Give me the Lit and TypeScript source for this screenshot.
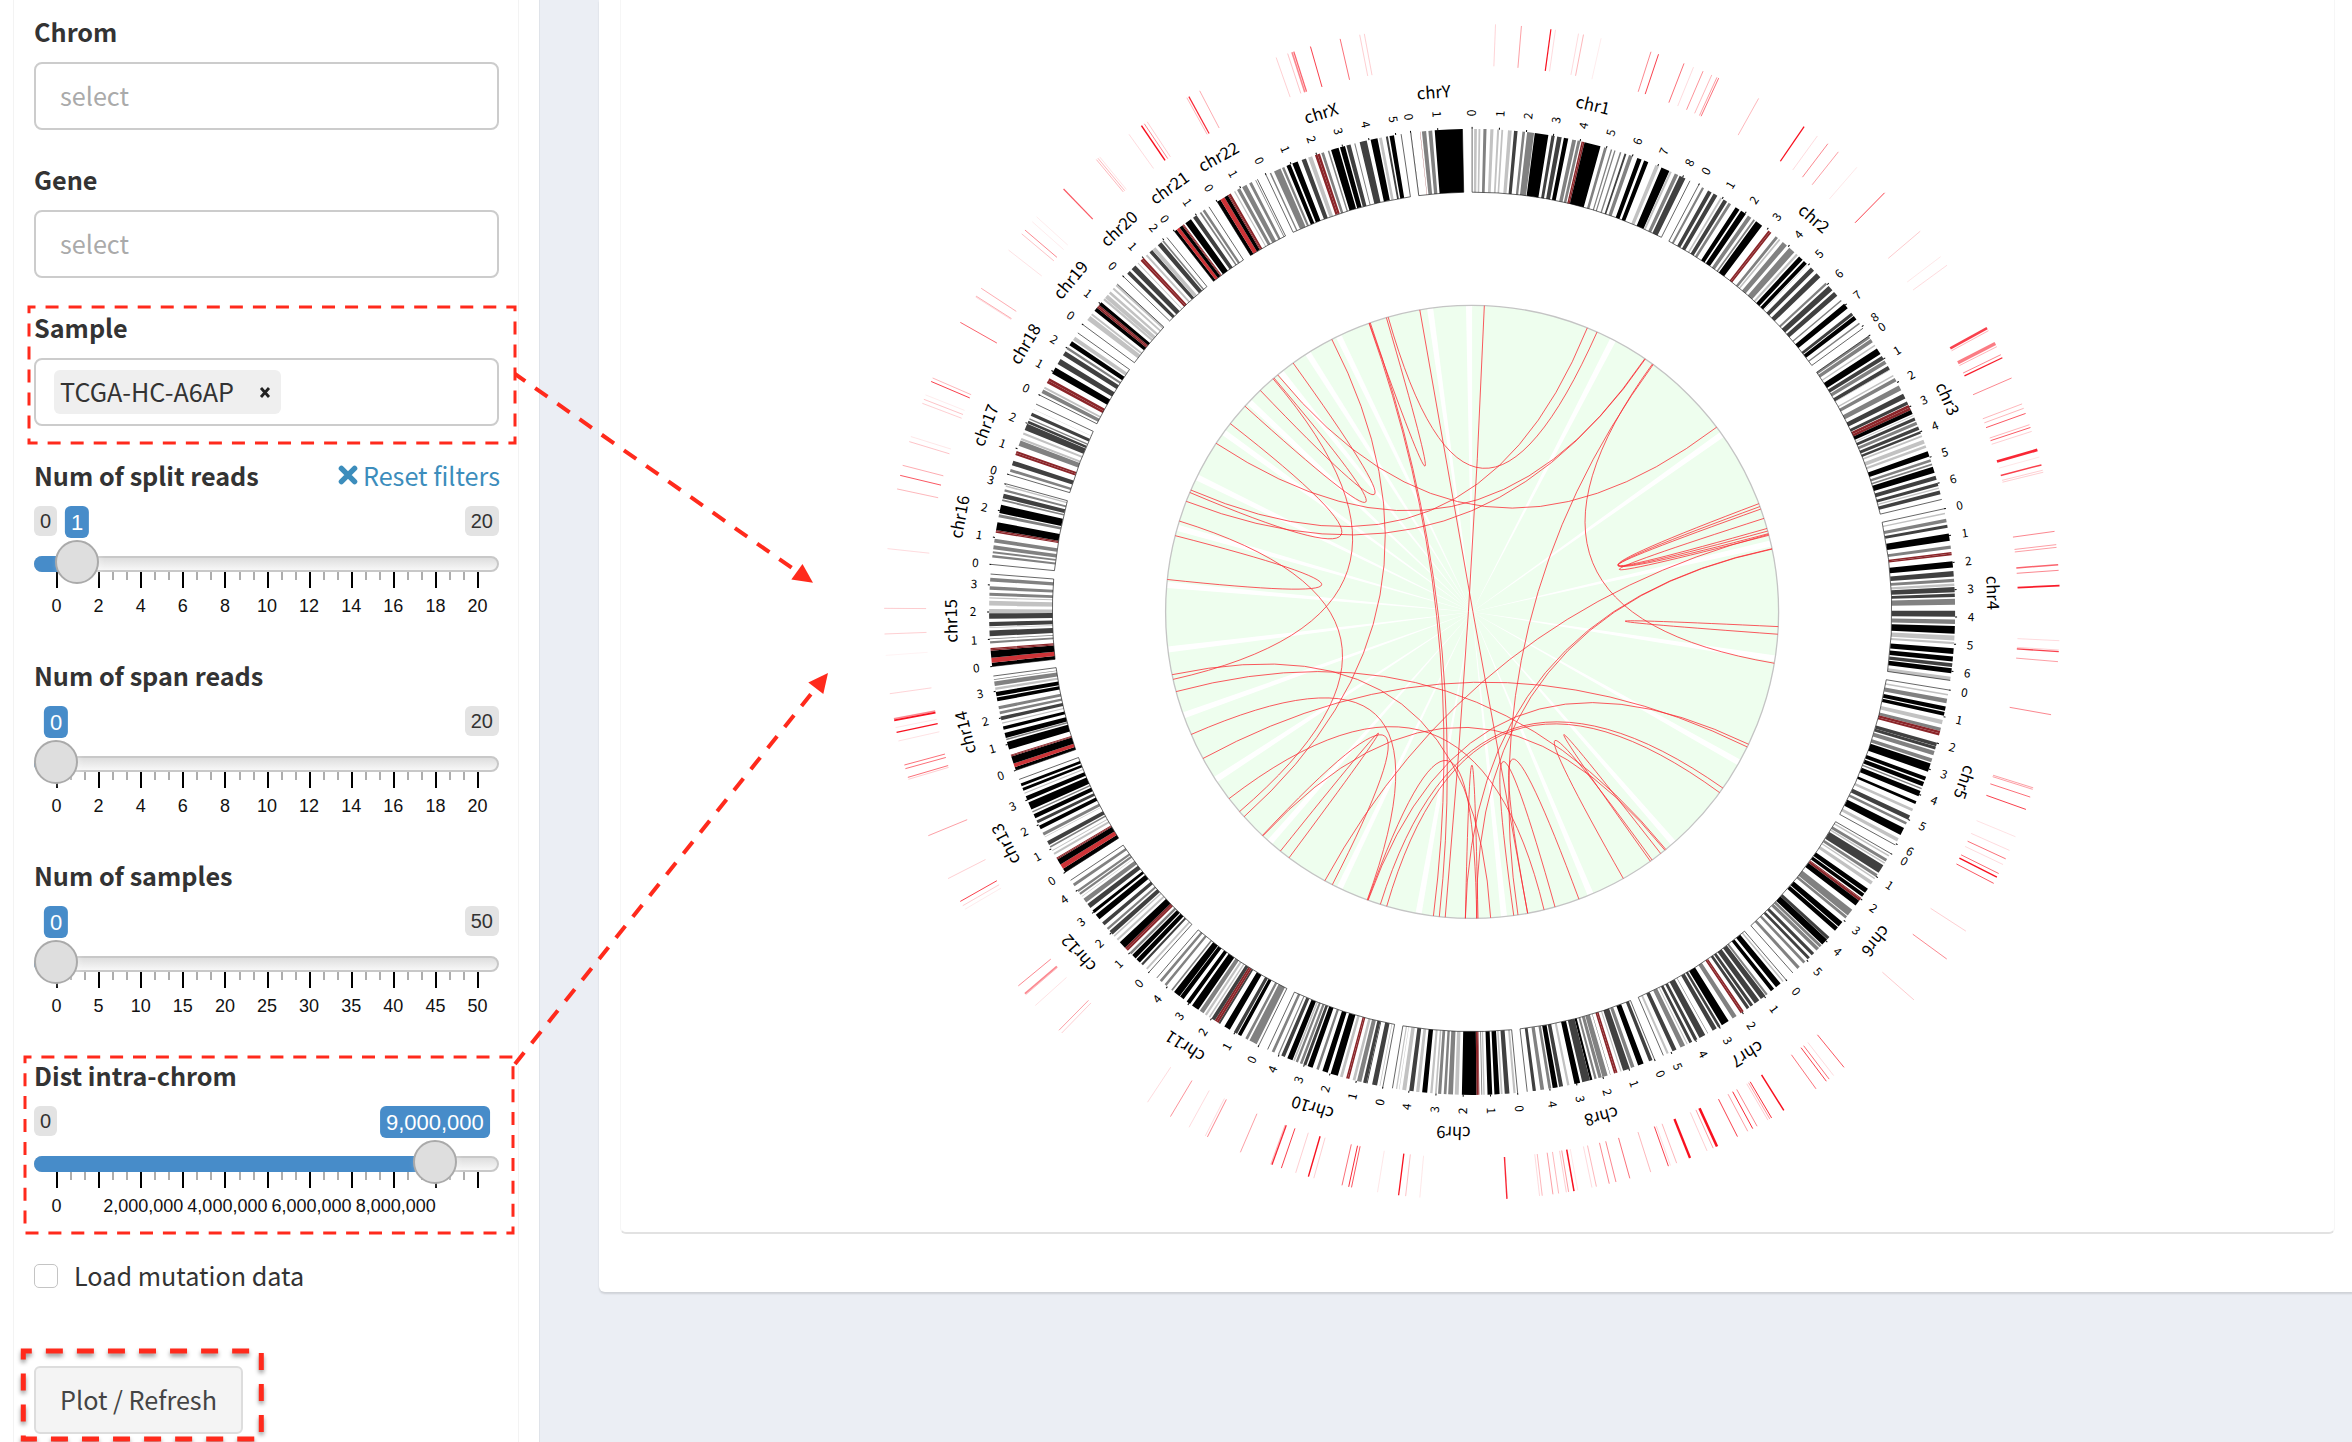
import { LitElement, html, svg, css } from 'lit';
import { customElement, property } from 'lit/decorators.js';

/* ---------- genome data ---------- */

// Cytobands per chromosome: end position in 0.1 Mb followed by the stain code.
// n negative, a/b/c/d 25/50/75/100 % positive, v variable, e centromere, s stalk
const BANDS: Array<[string, string]> = [
  ['chr1', '23n 53a 71n 91a 125n 159b 201n 236a 276n 299a 323n 343a 396n 437a 463n 502c 556n 585b 608n 685b 693n 844d 879n 915c 943n 993c 1018n 1067d 1112n 1155b 1172n 1204b 1217n 1234e 1251e 1432v 1475n 1506b 1551n 1566b 1591n 1605b 1655n 1672b 1709n 1730c 1761n 1803b 1858n 1908d 1938n 1987d 2071n 2113a 2144n 2239d 2244n 2268a 2305n 2346b 2364n 2435c 2490n'],
  ['chr2', '44n 69b 120n 165c 190n 238c 277n 298a 318n 363c 383n 415b 475n 526d 547n 610d 639n 684b 713n 733b 748n 831d 918n 939e 960e 1021n 1053b 1067n 1087a 1122n 1181b 1216n 1291b 1317n 1343a 1361n 1415d 1434n 1479d 1490n 1496a 1540n 1589c 1629n 1689c 1771n 1797b 1821n 1885c 1911n 1966c 2025n 2041b 2082n 2145d 2207n 2243c 2252n 2301d 2347n 2364b 2422n'],
  ['chr3', '28b 40n 81b 116n 132a 163n 238d 263n 308c 320n 364b 393n 436c 441n 442b 506n 523a 544n 586b 638n 697b 741n 798c 835n 871c 878n 909e 940e 986v 1003n 1012a 1031n 1065c 1082n 1116b 1137n 1176c 1193n 1222c 1241n 1261a 1295n 1340a 1360n 1390a 1431n 1492d 1523n 1553b 1573n 1593b 1610n 1679d 1712n 1760c 1793n 1830c 1848n 1863a 1882n 1926c 1983n'],
  ['chr4', '45n 60a 113n 150b 178n 213c 277n 358d 412n 446b 482n 500e 518e 585n 655d 694n 753c 779n 814b 831n 860a 871n 928c 942n 979c 1001n 1067b 1131n 1199c 1229n 1278b 1301n 1385d 1405n 1459a 1475n 1500a 1546n 1608d 1636n 1692d 1710n 1754c 1766n 1823d 1861n 1902a'],
  ['chr5', '44n 63a 99n 150b 184n 233d 246n 289d 338n 384a 425n 461b 488e 514e 596n 636c 639n 674c 691n 740b 776n 821b 835n 930d 989n 1034d 1051n 1102d 1121n 1138b 1159n 1221d 1279n 1312d 1369n 1401a 1451n 1504c 1533n 1563b 1605n 1690d 1733n 1771a 1815n'],
  ['chr6', '23n 42a 71n 106b 116n 134a 152n 252c 271n 305b 321n 335a 366n 405a 462n 518d 530n 572d 587n 598e 626e 627n 692d 752n 832b 842n 873b 925n 989d 1000n 1050d 1142n 1179c 1181n 1258d 1268n 1300b 1309n 1349b 1386n 1424c 1452n 1486c 1521n 1552b 1606n 1641b 1708n'],
  ['chr7', '28n 45a 72n 137d 165n 209d 255n 279b 288n 349c 371n 433c 454n 490c 505n 539c 581n 601e 621e 675n 727b 779n 867d 885n 915c 933n 984c 1042n 1049b 1078n 1150c 1177n 1214c 1241n 1275c 1296n 1308a 1329n 1385b 1434n 1482c 1528n 1552a 1593n'],
  ['chr8', '23n 63c 128n 192d 235n 275b 290n 367c 385n 399a 432n 452e 472e 513n 517c 546n 606b 613n 651b 671n 696b 720n 746d 747n 835c 859n 923d 979n 1005a 1051n 1095c 1111n 1167d 1183n 1215b 1263n 1304b 1354n 1390c 1451n'],
  ['chr9', '22n 46a 90n 142c 166n 185a 199n 256d 280n 332d 363n 379a 390n 400b 422n 430e 455e 615v 650n 693a 713n 766b 785n 815b 843n 878b 892n 912a 939n 965a 998n 1054d 1085n 1121a 1149n 1198c 1231n 1275a 1306n 1311a 1331n 1345a 1384n'],
  ['chr10', '30n 38a 66n 122c 173n 183c 184n 223c 243n 293b 311n 342a 380n 398e 416e 455n 486a 511n 594d 628n 689d 731n 759b 803n 861d 877n 911c 923n 952b 975n 1001b 1012n 1031a 1040n 1101d 1131n 1173c 1199n 1213b 1257n 1288b 1338n'],
  ['chr11', '28n 117b 138n 168b 220n 262d 272n 312c 364n 434d 488n 510c 534e 558e 601c 619n 636a 661n 687a 705n 755b 774n 859d 886n 932d 974n 1023d 1030n 1106d 1127n 1146b 1213n 1240b 1279n 1309b 1351n'],
  ['chr12', '32n 53a 100n 126c 146n 198d 211n 263d 276n 305b 332n 355e 378e 460d 487n 511a 545n 562a 577n 627c 647n 673b 711n 753c 799n 863d 886n 922d 958n 1012c 1035n 1086b 1113n 1119a 1139n 1164b 1177n 1203b 1254n 1287b 1333n'],
  ['chr13', '46v 101s 165v 177e 189e 226n 249a 272n 283a 316n 334b 349n 395c 446n 452a 467n 503b 547n 590d 618n 652c 681n 728d 749n 766b 785n 871d 894n 944d 975n 987a 1011n 1042d 1064n 1096d 1144n'],
  ['chr14', '36v 80s 161v 172e 182e 241n 329d 348n 366b 374n 430d 467n 504d 536n 550a 576n 616c 643n 674b 698n 733b 788n 831d 844n 893d 914n 942a 958n 1009b 1027n 1035b 1070n'],
  ['chr15', '42v 97s 175v 190e 205e 255n 278b 300n 309b 334n 398c 425n 433a 445n 492c 526n 588c 590n 634a 669n 670a 672n 724a 749n 763a 780n 814b 847n 885b 938n 980b 1020n'],
  ['chr16', '78n 104b 125n 147b 167n 212b 242n 285b 353n 368e 384e 470v 526n 560b 573n 666d 708n 728b 741n 792c 816n 841b 870n 887a 903n'],
  ['chr17', '34n 65b 108n 161c 227n 251e 274e 335n 398b 402n 428a 468n 493a 521n 595c 602n 631c 646n 662b 691n 729c 768n 772a 833n'],
  ['chr18', '29n 72b 85n 109a 154n 185e 215e 275n 351d 395n 459c 507n 562c 586n 613b 639n 691d 710n 754a 804n'],
  ['chr19', '69n 126a 138n 161a 199n 242v 262e 281e 319v 351n 378a 382n 429a 447n 475a 509n 531a 558n 586a'],
  ['chr20', '51n 92c 120n 179c 213n 223a 257n 281e 304e 335n 358a 390n 431c 435n 478a 512n 564c 578n 597b 644n'],
  ['chr21', '31v 70s 109v 120e 130e 150n 226d 255n 302c 344n 364b 383n 412b 467n'],
  ['chr22', '43v 94s 137v 150e 174e 217n 231a 255n 292b 318n 372b 406n 438b 481n 491b 508n'],
  ['chrX', '44n 61b 96n 174b 192n 219b 246n 293d 315n 378d 425n 476c 501n 548a 581n 610e 638e 654n 685b 730n 747b 768n 854d 870n 927d 943n 991c 1033n 1045b 1094n 1174c 1218n 1295d 1313n 1345a 1389n 1412c 1430n 1480d 1560n'],
  ['chrY', '3n 6b 103n 104e 106e 124n 171b 196n 238b 266n 572v'],
];

const STAIN: Record<string, string> = {
  n: '#ffffff', a: '#c2c2c2', b: '#818181', c: '#404040', d: '#000000',
  v: '#000000', e: '#8b2529', s: '#cd3337',
};

const CX = 1472.1, CY = 611.9;
const R_LINK = 306.5, R_IN = 419.7, R_OUT = 483, R_MARK0 = 546, R_MARK1 = 588;
const PAD = 0.02;

interface Chrom { name: string; start: number; end: number; bands: Array<[number, number, string]>; ticks: number[] }

const parsed = BANDS.map(([name, s]) => ({
  name,
  list: s.split(' ').map((b) => [parseInt(b, 10) / 10, b.slice(-1)] as [number, string]),
}));
const total = parsed.reduce((t, c) => t + c.list[c.list.length - 1][0], 0);
const K = (2 * Math.PI - PAD * parsed.length) / total;

let cursor = 0;
const CHROMS: Chrom[] = parsed.map(({ name, list }) => {
  const start = cursor;
  let prev = 0;
  const bands = list.map(([end, stain]) => {
    const b: [number, number, string] = [start + prev * K, start + end * K, stain];
    prev = end;
    return b;
  });
  const ticks: number[] = [];
  for (let mb = 0; mb <= prev; mb += 30) ticks.push(start + mb * K);
  const end = start + prev * K;
  cursor = end + PAD;
  return { name, start, end, bands, ticks };
});

const pt = (a: number, r: number) =>
  `${(CX + r * Math.sin(a)).toFixed(2)},${(CY - r * Math.cos(a)).toFixed(2)}`;

const ring = (a0: number, a1: number, r0: number, r1: number) =>
  `M${pt(a0, r1)}A${r1},${r1} 0 0 1 ${pt(a1, r1)}L${pt(a1, r0)}A${r0},${r0} 0 0 0 ${pt(a0, r0)}Z`;

// Fusion links: endpoint pairs on the inner rim, in link units around (789, 788)
const LINKS: number[][] = [
  [818, 62, 725, 1515], [665, 72, 921, 1504], [1062, 115, 122, 499], [1200, 188, 180, 387],
  [1199, 187, 109, 525], [215, 341, 120, 505], [1085, 125, 590, 89], [586, 91, 545, 102],
  [544, 102, 697, 1511], [547, 101, 711, 1513], [456, 141, 248, 1274], [237, 1262, 93, 572],
  [316, 234, 80, 948], [364, 197, 286, 262], [249, 299, 318, 232], [328, 226, 1369, 350],
  [65, 711, 84, 607], [1216, 201, 1507, 910], [1218, 202, 898, 1508], [888, 1510, 986, 1489],
  [921, 1504, 1043, 1471], [1501, 638, 773, 1517], [1501, 639, 800, 1517], [1493, 604, 439, 1427],
  [457, 1436, 291, 1319], [355, 1371, 333, 1357], [122, 1079, 540, 1472], [541, 1473, 800, 1517],
  [77, 937, 833, 1514], [1443, 1101, 542, 1473], [1441, 1108, 150, 1136], [1384, 1206, 571, 1483],
  [1378, 1218, 586, 1488], [87, 977, 1249, 1352], [211, 1232, 960, 1496], [292, 1320, 1247, 1354],
  [1213, 1381, 1237, 1362], [1148, 1421, 1217, 1378], [773, 1517, 803, 1517], [1470, 531, 1493, 602],
  [1472, 538, 1491, 596], [1474, 544, 1489, 590], [1482, 566, 1494, 606], [1517, 823, 1515, 841],
];
const linkPath = ([x1, y1, x2, y2]: number[]) => {
  const a = Math.atan2(x1 - 789, 788 - y1);
  const b = Math.atan2(x2 - 789, 788 - y2);
  return `M${pt(a, R_LINK)}Q${CX},${CY} ${pt(b, R_LINK)}`;
};

// Outer marks, by sector: origin, units per pixel, then x, y, opacity and optional width
interface Sector { ox: number; oy: number; sx: number; sy: number; m: number[][] }
const SECTORS: Sector[] = [
  { ox: 1400, oy: 0, sx: 2.24, sy: 3, m: [
    [214, 73, .18], [272, 78, .4], [338, 88, 1, 1.2], [348, 92, .15], [400, 100, .15], [411, 104, .3], [450, 118, .08],
    [562, 156, .5], [579, 163, .8], [636, 191, .6], [657, 203, .15], [679, 213, .45], [698, 226, .3], [710, 232, .4],
    [714, 234, .6], [803, 296, .3], [905, 380, 1, 1.3], [935, 408, .15], [958, 432, .5], [981, 457, .4], [1022, 504, .1],
    [1085, 579, .8], [1165, 694, .22], [1210, 771, .1], [1224, 797, .15], [1314, 985, .8, 2.6], [1317, 993, .3],
    [1333, 1031, .55, 3.4], [1334, 1042, .3], [1346, 1064, .5], [1348, 1074, .95, 1.3], [1370, 1134, .5], [1393, 1212, .3],
    [1397, 1225, .3], [1400, 1241, .7], [1408, 1275, .3], [1411, 1283, .7], [1413, 1295, .2], [1427, 1350, .9, 2.8],
    [1430, 1372, .1], [1436, 1395, .8, 1.5], [1439, 1411, .2], [1440, 1417, .2]] },
  { ox: 1700, oy: 440, sx: 3, sy: 3, m: [
    [1064, 274, .5], [1068, 314, .4], [1070, 322, .4], [1074, 374, .65, 1.5], [1076, 391, .5], [1078, 437, .95, 1.8],
    [1077, 602, .15], [1075, 635, .8, 1.3], [1074, 630, .2], [1074, 665, .4], [1053, 824, .5], [998, 1043, .4],
    [998, 1048, .4], [990, 1071, .6], [977, 1108, .8], [946, 1190, .12], [928, 1231, .15], [916, 1256, .6],
    [908, 1273, .15], [895, 1300, .6], [890, 1311, 1, 1.3], [881, 1330, .7], [797, 1473, .2]] },
  { ox: 1440, oy: 840, sx: 2.24, sy: 3, m: [
    [1134, 356, .5], [1061, 479, .22], [905, 682, .7], [882, 707, .15], [871, 716, .6], [865, 723, .8], [842, 746, .6],
    [770, 811, 1, 1.5], [742, 832, .9], [738, 835, .4], [734, 839, .2], [710, 858, .5], [701, 867, .9], [689, 873, .4],
    [666, 889, .8], [620, 918, 1, 2.6], [612, 925, .4], [598, 932, .2], [560, 954, 1, 2.3], [530, 969, .3], [511, 976, .8],
    [515, 972, .15], [472, 996, .3], [425, 1014, .6], [394, 1025, .5], [379, 1030, .5], [350, 1038, .3], [340, 1040, .15],
    [300, 1052, 1, 1.5], [308, 1046, .1], [288, 1055, .4], [283, 1057, .2], [266, 1062, .3], [253, 1063, .4],
    [229, 1067, .3], [223, 1067, .15], [150, 1077, .9, 1.4]] },
  { ox: 860, oy: 840, sx: 2.529, sy: 3, m: [
    [1416, 1070, .1], [1380, 1067, .25], [1362, 1067, 1, 1.3], [1309, 1055, .1], [1243, 1042, .7], [1236, 1040, .9],
    [1219, 1036, .6], [1148, 1013, .2], [1134, 1010, 1, 1.4], [1102, 998, .2], [1066, 983, .8], [1042, 974, .9, 1.3],
    [1040, 969, .3], [962, 937, .4], [879, 890, .5], [875, 884, .15], [833, 860, .15], [785, 830, .45], [727, 787, .15],
    [511, 578, .2], [503, 571, .4], [443, 497, .12], [417, 461, .5, 1.6], [420, 463, .3], [401, 437, .5], [268, 206, .08],
    [260, 197, .2], [254, 184, .8], [224, 115, .2]] },
  { ox: 860, oy: 440, sx: 3, sy: 3, m: [
    [205, 1187, .4], [145, 1018, .2], [144, 1012, .6], [136, 986, .6], [133, 975, .6], [115, 903, .12], [109, 877, 1, 1.2],
    [110, 862, .1], [103, 841, 1, 2], [102, 836, .5, 1.5], [90, 761, .18], [80, 646, .05], [73, 582, .2], [72, 505, .22],
    [83, 326, .15], [112, 147, .3], [120, 106, .7], [128, 76, .35]] },
  { ox: 860, oy: 0, sx: 2.6133, sy: 3, m: [
    [129, 1325, .25], [134, 1310, .1], [163, 1210, .2], [167, 1198, .25], [172, 1185, .08], [187, 1145, .8],
    [192, 1135, .3], [262, 967, .65], [303, 888, .35], [305, 893, .15], [317, 865, .35], [389, 751, .12], [423, 702, .25],
    [431, 690, .5], [450, 665, .08], [463, 652, .08], [532, 567, .7, 1.2], [618, 479, .3], [622, 475, .3], [628, 473, .12],
    [703, 403, .15], [736, 378, 1, 1.5], [744, 373, .5], [752, 368, .2], [854, 293, .3], [860, 291, .9, 1.2],
    [888, 273, .35], [1088, 174, .2], [1118, 162, .25], [1129, 157, .5, 1.6], [1134, 156, .65, 1.3], [1177, 139, .8],
    [1255, 118, .6], [1306, 105, .2], [1318, 102, .2]] },
];
const MARKS = SECTORS.flatMap(({ ox, oy, sx, sy, m }) =>
  m.map(([x, y, o, w]) => ({ a: Math.atan2(ox + x / sx - CX, CY - (oy + y / sy)), o, w: w ?? 1 })));

/* ---------- circos plot ---------- */

@customElement('circos-plot')
class CircosPlot extends LitElement {
  static styles = css`
    :host { display: block; }
    svg { display: block; width: 1714px; height: 1232px; }
    text { font-family: 'Noto Sans CJK JP', 'Noto Sans', sans-serif; fill: #000; }
    .tick { font-size: 11.8px; }
    .name { font-size: 16.6px; text-anchor: middle; }
    .sector { fill: #eefeee; }
    .rim { fill: none; stroke: #c4c4c4; stroke-width: 1.3; }
    .link { fill: none; stroke: #fb2a33; stroke-opacity: 0.78; stroke-width: 1; }
    .outline { fill: none; stroke: #000; stroke-width: 0.6; }
  `;

  private tickLabel(a: number, i: number) {
    const deg = (a * 180) / Math.PI;
    const left = a > Math.PI;
    const rot = left ? deg + 90 : deg - 90;
    const x = left ? -495.7 : 495.7;
    return svg`
      <line x1=${R_OUT} x2=${R_OUT + 2} y1="0" y2="0" stroke="#000" stroke-width="1"
        transform="translate(${CX} ${CY}) rotate(${deg - 90})"></line>
      <text class="tick" x=${x} y="4.2" text-anchor=${left ? 'end' : 'start'}
        transform="translate(${CX} ${CY}) rotate(${rot})">${i}</text>`;
  }

  render() {
    return html`<svg viewBox="620 0 1714 1232">
      ${CHROMS.map((c) => svg`<path class="sector" d="M${CX},${CY}L${pt(c.start, R_LINK)}A${R_LINK},${R_LINK} 0 0 1 ${pt(c.end, R_LINK)}Z"></path>`)}
      <circle class="rim" cx=${CX} cy=${CY} r=${R_LINK}></circle>
      ${LINKS.map((l) => svg`<path class="link" d=${linkPath(l)}></path>`)}
      ${CHROMS.map((c) => svg`
        ${c.bands.filter((b) => b[2] !== 'n').map(([s, e, k]) => svg`<path fill=${STAIN[k]} d=${ring(s, e, R_IN, R_OUT)}></path>`)}
        <path class="outline" d="M${pt(c.start, R_OUT)}L${pt(c.start, R_IN)}A${R_IN},${R_IN} 0 0 1 ${pt(c.end, R_IN)}L${pt(c.end, R_OUT)}"></path>
        ${c.ticks.map((t, i) => this.tickLabel(t, i))}
        <text class="name" x="0" y="-515"
          transform="translate(${CX} ${CY}) rotate(${((c.start + c.end) * 90) / Math.PI})">${c.name}</text>`)}
      ${MARKS.map((m) => svg`<path stroke="#f8101f" stroke-width=${m.w} stroke-opacity=${m.o} d="M${pt(m.a, R_MARK0)}L${pt(m.a, R_MARK1)}"></path>`)}
    </svg>`;
  }
}

/* ---------- slider ---------- */

@customElement('range-slider')
class RangeSlider extends LitElement {
  @property({ type: Number }) ratio = 0;
  @property() min = '';
  @property() max = '';
  @property() value = '';
  @property({ attribute: false }) labels: string[] = [];
  @property({ type: Number }) shift = 0;

  static styles = css`
    :host { display: block; height: 120px; font-family: 'Liberation Sans', Arial, sans-serif; }
    .wrap { position: relative; height: 120px; }
    .badges { display: flex; justify-content: space-between; height: 30px; }
    .cap { height: 30px; line-height: 30px; box-sizing: border-box; padding: 0 6px; border-radius: 6px;
      background: #e3e3e3; color: #333; font-size: 20px; }
    .value { position: absolute; top: 0; height: 32px; line-height: 33px; padding: 0 6px; border-radius: 6px;
      background: #478cc9; color: #fff; font-size: 22px; transform: translateX(-50%); }
    .track { margin-top: 20px; height: 16px; box-sizing: border-box; border: 2px solid #c8c8c8; border-radius: 9px;
      background: linear-gradient(#dedede, #f7f7f7); }
    .bar { position: absolute; left: 0; top: 50px; height: 16px; background: #478cc9; border-radius: 9px 0 0 9px; }
    .knob { position: absolute; top: 34px; width: 44px; height: 44px; box-sizing: border-box; border-radius: 50%;
      border: 2px solid #aaa; background: #dedede; transform: translateX(-50%); box-shadow: 2px 2px 6px rgba(255,255,255,.3); }
    svg { display: block; width: 465px; height: 54px; overflow: visible; }
    text { font-size: 18px; text-anchor: middle; fill: #111; }
  `;

  render() {
    const x = 22 + this.ratio * 421;
    const ticks = Array.from({ length: 31 }, (_, i) => i);
    return html`<div class="wrap">
      <div class="badges">
        ${this.min ? html`<span class="cap">${this.min}</span>` : html`<span></span>`}
        ${this.max ? html`<span class="cap">${this.max}</span>` : html`<span></span>`}
      </div>
      <div class="track"></div>
      <svg viewBox="0 0 465 54">
        ${ticks.map((i) => svg`<path stroke=${i % 3 ? '#999' : '#000'} stroke-width=${i % 3 ? 1.6 : 2}
          d="M${Math.round(23 + i * 14.04)},0v${i % 3 ? 8 : 16}"></path>`)}
        ${this.labels.map((l, i) => svg`<text x=${22.5 + i * 42.1 + (i ? this.shift : 0)} y="40">${l}</text>`)}
      </svg>
      <div class="bar" style="width:${x}px"></div>
      <div class="knob" style="left:${x}px"></div>
      <span class="value" style="left:${x}px">${this.value}</span>
    </div>`;
  }
}

/* ---------- page ---------- */

@customElement('app-root')
class AppRoot extends LitElement {
  static styles = css`
    :host { display: block; position: relative; width: 2352px; height: 1442px; overflow: hidden; background: #ebeef4;
      font-family: 'Noto Sans CJK JP', 'Noto Sans', sans-serif; font-size: 25.2px; color: #333; }
    .page { display: flex; height: 1442px; }
    .side { width: 540px; box-sizing: border-box; padding: 0 20px 0 13px; background: #fff; border-right: 1px solid #dfe3e9; }
    .form { height: 1442px; box-sizing: border-box; padding: 12px 20px 0; border: solid #f3f3f3; border-width: 0 1px; }
    .label { display: flex; justify-content: space-between; height: 40px; line-height: 38px; margin-bottom: 10px;
      white-space: nowrap; width: 466px; }
    .label b { font-weight: 700; }
    .reset { display: flex; align-items: center; height: 38px; gap: 5px; color: #3c8dbc; }
    .box { display: flex; align-items: center; height: 68px; box-sizing: border-box; margin-bottom: 30px; padding: 0 18px;
      border: 2px solid #ccc; border-radius: 8px; width: 465px; }
    .ph { color: #aaa; padding: 0 0 2px 6px; }
    .tag { display: flex; align-items: center; height: 44px; width: 227px; box-sizing: border-box; padding: 0 10px 0 6px;
      justify-content: space-between; background: #efefef; border-radius: 6px; }
    .tag span { line-height: 42px; height: 44px; }
    .gap { margin-bottom: 30px; }
    range-slider { width: 465px; }
    .check { display: flex; align-items: center; gap: 16px; height: 40px; line-height: 38px; }
    .check .text { height: 40px; }
    .tick { width: 24px; height: 24px; box-sizing: border-box; border: 1.5px solid #c4c4c4; border-radius: 5px; background: #fff; }
    .btn { display: flex; align-items: center; justify-content: center; width: 209px; height: 68px; box-sizing: border-box;
      margin-top: 70px; padding-bottom: 2px; border: 2px solid #ddd; border-radius: 6px; background: #f4f4f4; color: #444; }
    .main { flex: 1; padding-left: 59px; }
    .card { height: 1292px; box-sizing: border-box; padding: 0 18px 0 21px; background: #fff; border-bottom-left-radius: 6px;
      box-shadow: 0 2px 2px rgba(0, 0, 0, .12); }
    .well { height: 1234px; box-sizing: border-box; border: solid #f6f6f6; border-width: 0 1px 2px; border-bottom-color: #e2e2e2;
      border-radius: 0 0 6px 6px; overflow: hidden; }
    circos-plot { margin-left: -1px; }
    .notes { position: absolute; left: 0; top: 0; width: 900px; height: 1442px; fill: none; stroke: #ff2a1c; }
    .notes polygon { fill: #ff2a1c; stroke: none; }
    .shade { filter: drop-shadow(0 3px 2px rgba(0, 0, 0, .4)); }
  `;

  render() {
    const even = ['0', '2', '4', '6', '8', '10', '12', '14', '16', '18', '20'];
    const fives = ['0', '5', '10', '15', '20', '25', '30', '35', '40', '45', '50'];
    const dist = ['0', '', '2,000,000', '', '4,000,000', '', '6,000,000', '', '8,000,000'];
    return html`
      <div class="page">
        <div class="side"><div class="form">
          <div class="label"><b>Chrom</b></div>
          <div class="box"><span class="ph">select</span></div>
          <div class="label"><b>Gene</b></div>
          <div class="box"><span class="ph">select</span></div>
          <div class="label"><b>Sample</b></div>
          <div class="box"><div class="tag"><span>TCGA-HC-A6AP</span>
            <svg width="12" height="14" viewBox="0 0 12 14"><path d="M2 3L10 12M10 3L2 12" stroke="#222" stroke-width="2.8"></path></svg>
          </div></div>
          <div class="label"><b>Num of split reads</b>
            <span class="reset"><svg width="20" height="20" viewBox="0 0 20 20"><path d="M3.4 3.4L16.6 16.6M16.6 3.4L3.4 16.6" stroke="#3c8dbc" stroke-width="5.4" stroke-linecap="round"></path></svg><span>Reset filters</span></span>
          </div>
          <range-slider class="gap" min="0" max="20" value="1" .ratio=${0.05} .labels=${even}></range-slider>
          <div class="label"><b>Num of span reads</b></div>
          <range-slider class="gap" max="20" value="0" .labels=${even}></range-slider>
          <div class="label"><b>Num of samples</b></div>
          <range-slider class="gap" max="50" value="0" .labels=${fives}></range-slider>
          <div class="label"><b>Dist intra-chrom</b></div>
          <range-slider class="gap" min="0" value="9,000,000" .ratio=${0.9} .labels=${dist} .shift=${2.5}></range-slider>
          <div class="check"><span class="tick"></span><span class="text">Load mutation data</span></div>
          <div class="btn">Plot / Refresh</div>
        </div></div>
        <div class="main"><div class="card"><div class="well"><circos-plot></circos-plot></div></div></div>
      </div>
      <svg class="notes" viewBox="0 0 900 1442">
        <rect x="29" y="307" width="486" height="136" stroke-width="3" stroke-dasharray="13 10.04" stroke-dashoffset="6.5"></rect>
        <rect x="25" y="1057" width="488" height="176" stroke-width="3" stroke-dasharray="13 9.9" stroke-dashoffset="6.5"></rect>
        <rect class="shade" x="23.3" y="1351" width="238" height="88" stroke-width="5" stroke-dasharray="17 14.05" stroke-dashoffset="8.5"></rect>
        <path d="M515,374L792,568" stroke-width="4" stroke-dasharray="15 12.1" stroke-dashoffset="2.5"></path>
        <polygon points="813,582.7 802.5,564 791.3,579.5"></polygon>
        <path d="M515,1064L811,694" stroke-width="4" stroke-dasharray="15 12" stroke-dashoffset="0.4"></path>
        <polygon points="828,673 808.3,682.5 823.3,694"></polygon>
      </svg>`;
  }
}
